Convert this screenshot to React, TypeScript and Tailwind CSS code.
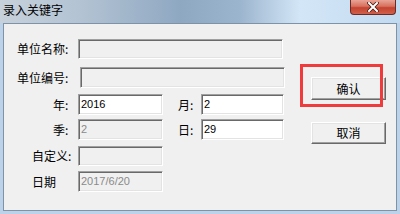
// Win7-style "录入关键字" dialog with sunken fields and raised buttons.

const sunken =
  "border-t border-l border-t-[#a0a0a0] border-l-[#a0a0a0] border-b border-r border-b-white border-r-white shadow-[inset_1px_1px_0_#696969,inset_-1px_-1px_0_#e3e3e3]";

const raised =
  "border-t border-l border-t-white border-l-white border-b border-r border-b-[#696969] border-r-[#696969] shadow-[inset_-1px_-1px_0_#a0a0a0,inset_1px_1px_0_#e3e3e3]";

function Field({
  value,
  disabled,
  className,
}: {
  value?: string;
  disabled?: boolean;
  className: string;
}) {
  return (
    <div
      className={`${sunken} ${className} flex items-center pl-[2px] text-[11px] font-['Liberation_Sans',sans-serif] ${
        disabled ? "bg-[#f0f0f0] text-[#8a8a8a]" : "bg-white text-black"
      }`}
    >
      {value}
    </div>
  );
}

function Label({ text, pl, w }: { text: string; pl: string; w: string }) {
  return <span className={`${w} ${pl} shrink-0 whitespace-nowrap`}>{text}</span>;
}

function App() {
  return (
    <div className="w-[400px] h-[214px] flex flex-col bg-[#bcd2e8] font-['Noto_Sans_CJK_SC',sans-serif] text-[12px] text-black overflow-hidden">
      {/* Title bar */}
      <div className="h-[23px] shrink-0 flex items-start justify-between bg-[linear-gradient(90deg,#c7d1db_0%,#b3c3d3_20%,#8fa8c2_45%,#9cb5ce_60%,#d3e6f7_75%,#c2daf0_100%)]">
        <span className="pl-[3px] pt-[2px] leading-[16px]">录入关键字</span>
        <div className="mr-[4px] w-[46px] h-[15px] rounded-b-[4px] border border-t-0 border-[#6b2a24] bg-[linear-gradient(180deg,#e9a496_0%,#d8705e_45%,#c4432f_55%,#d1604a_100%)] flex items-center justify-center">
          <svg width="12" height="10" viewBox="0 0 12 10">
            <path d="M2 1 L10 9 M10 1 L2 9" stroke="#4a1a14" strokeWidth="3.6" strokeLinecap="square" />
            <path d="M2 1 L10 9 M10 1 L2 9" stroke="#ffffff" strokeWidth="2" strokeLinecap="square" />
          </svg>
        </div>
      </div>

      {/* Client area */}
      <div className="flex-1 ml-[3px] mr-[3px] mb-[3px] border border-[#7f93a8] bg-[#f0f0f0] flex">
        <div className="w-[307px] flex flex-col">
          <div className="mt-[15px] h-[20px] flex items-center">
            <Label text="单位名称:" pl="pl-[13px]" w="w-[74px]" />
            <Field className="w-[205px] h-[20px]" disabled />
          </div>
          <div className="mt-[8px] h-[21px] flex items-center">
            <Label text="单位编号:" pl="pl-[13px]" w="w-[76px]" />
            <Field className="w-[205px] h-[21px]" disabled />
          </div>
          <div className="mt-[6px] h-[21px] flex items-center">
            <Label text="年:" pl="pl-[49px]" w="w-[74px]" />
            <Field className="w-[85px] h-[21px]" value="2016" />
            <Label text="月:" pl="pl-[15px]" w="w-[38px]" />
            <Field className="w-[83px] h-[21px]" value="2" />
          </div>
          <div className="mt-[4px] h-[21px] flex items-center">
            <Label text="季:" pl="pl-[49px]" w="w-[74px]" />
            <Field className="w-[85px] h-[21px]" value="2" disabled />
            <Label text="日:" pl="pl-[15px]" w="w-[38px]" />
            <Field className="w-[83px] h-[21px]" value="29" />
          </div>
          <div className="mt-[6px] h-[20px] flex items-center">
            <Label text="自定义:" pl="pl-[28px]" w="w-[74px]" />
            <Field className="w-[85px] h-[20px]" disabled />
          </div>
          <div className="mt-[5px] h-[21px] flex items-center">
            <Label text="日期" pl="pl-[28px]" w="w-[74px]" />
            <Field className="w-[85px] h-[21px]" value="2017/6/20" disabled />
          </div>
        </div>

        <div className="relative flex flex-col pt-[53px] gap-[22px]">
          <button className={`${raised} w-[75px] h-[23px] bg-[#f0f0f0] flex items-center justify-center`}>
            确认
          </button>
          <button className={`${raised} w-[75px] h-[22px] bg-[#f0f0f0] flex items-center justify-center`}>
            取消
          </button>
          {/* red highlight frame */}
          <div className="absolute left-[-11px] top-[40px] w-[83px] h-[43px] border-[3px] border-[#ef3b3b]" />
        </div>
      </div>
    </div>
  );
}

export default App;
